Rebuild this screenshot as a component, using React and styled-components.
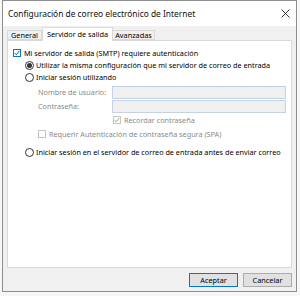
import styled, { createGlobalStyle } from 'styled-components'

const Global = createGlobalStyle`
    html, body {
        margin: 0;
        padding: 0;
        background: #f7f7f7;
        font-family: "Noto Sans", "Open Sans", sans-serif;
        color: #000;
    }
`

const Window = styled.div`
    box-sizing: border-box;
    margin-left: 2px;
    width: 295px;
    height: 292px;
    border: 1px solid #8e8e8e;
    background: #f0f0f0;
    display: grid;
    grid-template-rows: 25px 1fr;
    overflow: hidden;
`

const TitleBar = styled.div`
    background: #fff;
    display: flex;
    align-items: center;
    justify-content: space-between;
    padding: 0 6px 0 5px;
    font-size: 8.4px;
    color: #111;
`

const Body = styled.div`
    display: grid;
    grid-template-rows: 13px 228px 20px;
    padding: 1px 4px 0 4px;
`

const Tabs = styled.div`
    display: flex;
    align-items: flex-end;
    position: relative;
    z-index: 1;
`

const Tab = styled.div`
    box-sizing: border-box;
    height: ${p => p.$active ? '14px' : '10px'};
    width: ${p => p.$w}px;
    margin-bottom: ${p => p.$active ? '-1px' : '0'};
    background: ${p => p.$active ? '#fff' : '#f0f0f0'};
    border: 1px solid #d9d9d9;
    border-bottom: ${p => p.$active ? 'none' : '1px solid #d9d9d9'};
    border-left: ${p => p.$first || p.$active ? '1px solid #d9d9d9' : 'none'};
    font-size: 7.3px;
    display: flex;
    align-items: center;
    justify-content: center;
    padding-bottom: ${p => p.$active ? '2px' : '0'};
    white-space: nowrap;
`

const Panel = styled.div`
    box-sizing: border-box;
    background: #fff;
    border: 1px solid #d9d9d9;
    padding: 6px 0 0 0;
    display: flex;
    flex-direction: column;
    font-size: 7.25px;
    overflow: hidden;
`

const Row = styled.div`
    flex-shrink: 0;
    display: flex;
    align-items: center;
    height: ${p => p.$h}px;
    padding-left: ${p => p.$indent}px;
    margin-top: ${p => p.$mt || 0}px;
    color: ${p => p.$disabled ? '#8a8a8a' : '#000'};
    white-space: nowrap;
`

const Box = styled.span`
    flex-shrink: 0;
    box-sizing: border-box;
    width: 8px;
    height: 8px;
    border: 1px solid ${p => p.$disabled ? '#c4c4c4' : '#0078d7'};
    margin-right: 3px;
    display: flex;
    align-items: center;
    justify-content: center;
    background: #fff;
`

const Radio = styled.span`
    flex-shrink: 0;
    box-sizing: border-box;
    width: 9px;
    height: 9px;
    border-radius: 50%;
    border: 1px solid #333;
    margin-right: 2px;
    display: flex;
    align-items: center;
    justify-content: center;
    &::after {
        content: '';
        display: ${p => p.$on ? 'block' : 'none'};
        width: 5px;
        height: 5px;
        border-radius: 50%;
        background: #333;
    }
`

const Label = styled.span`
    flex-shrink: 0;
    width: 74px;
    color: #8a8a8a;
`

const Field = styled.div`
    flex-shrink: 0;
    box-sizing: border-box;
    width: 174px;
    height: 13px;
    background: #f0f0f0;
    border: 1px solid #c4d3e4;
`

const Footer = styled.div`
    display: flex;
    justify-content: flex-end;
    align-items: flex-start;
    gap: 5px;
    padding-top: 5px;
`

const Button = styled.div`
    box-sizing: border-box;
    width: 49px;
    height: 14px;
    background: #e1e1e1;
    border: 1px solid ${p => p.$default ? '#0078d7' : '#adadad'};
    font-size: 7.3px;
    display: flex;
    align-items: center;
    justify-content: center;
`

function Check({ color }) {
    return (
        <svg width="6" height="6" viewBox="0 0 6 6">
            <path d="M0.6 3 L2.3 4.8 L5.4 0.8" fill="none" stroke={color} strokeWidth="1" />
        </svg>
    )
}

function CloseIcon() {
    return (
        <svg width="9" height="9" viewBox="0 0 9 9">
            <path d="M0.5 0.5 L8.5 8.5 M8.5 0.5 L0.5 8.5" stroke="#222" strokeWidth="0.9" />
        </svg>
    )
}

export default function App() {
    return (
        <>
            <Global />
            <Window>
                <TitleBar>
                    <span>Configuración de correo electrónico de Internet</span>
                    <CloseIcon />
                </TitleBar>
                <Body>
                    <Tabs>
                        <Tab $w={35} $first>General</Tab>
                        <Tab $w={71} $active>Servidor de salida</Tab>
                        <Tab $w={42}>Avanzadas</Tab>
                    </Tabs>
                    <Panel>
                        <Row $h={12} $indent={5}>
                            <Box><Check color="#1a5fb4" /></Box>
                            Mi servidor de salida (SMTP) requiere autenticación
                        </Row>
                        <Row $h={12} $indent={17}>
                            <Radio $on />
                            Utilizar la misma configuración que mi servidor de correo de entrada
                        </Row>
                        <Row $h={12} $indent={17}>
                            <Radio />
                            Iniciar sesión utilizando
                        </Row>
                        <Row $h={14} $indent={30} $mt={2}>
                            <Label>Nombre de usuario:</Label>
                            <Field />
                        </Row>
                        <Row $h={14} $indent={30}>
                            <Label>Contraseña:</Label>
                            <Field />
                        </Row>
                        <Row $h={14} $indent={105} $disabled>
                            <Box $disabled><Check color="#a0a0a0" /></Box>
                            Recordar contraseña
                        </Row>
                        <Row $h={13} $indent={30} $disabled>
                            <Box $disabled />
                            Requerir Autenticación de contraseña segura (SPA)
                        </Row>
                        <Row $h={12} $indent={17} $mt={6}>
                            <Radio />
                            Iniciar sesión en el servidor de correo de entrada antes de enviar correo
                        </Row>
                    </Panel>
                    <Footer>
                        <Button $default>Aceptar</Button>
                        <Button>Cancelar</Button>
                    </Footer>
                </Body>
            </Window>
        </>
    )
}
